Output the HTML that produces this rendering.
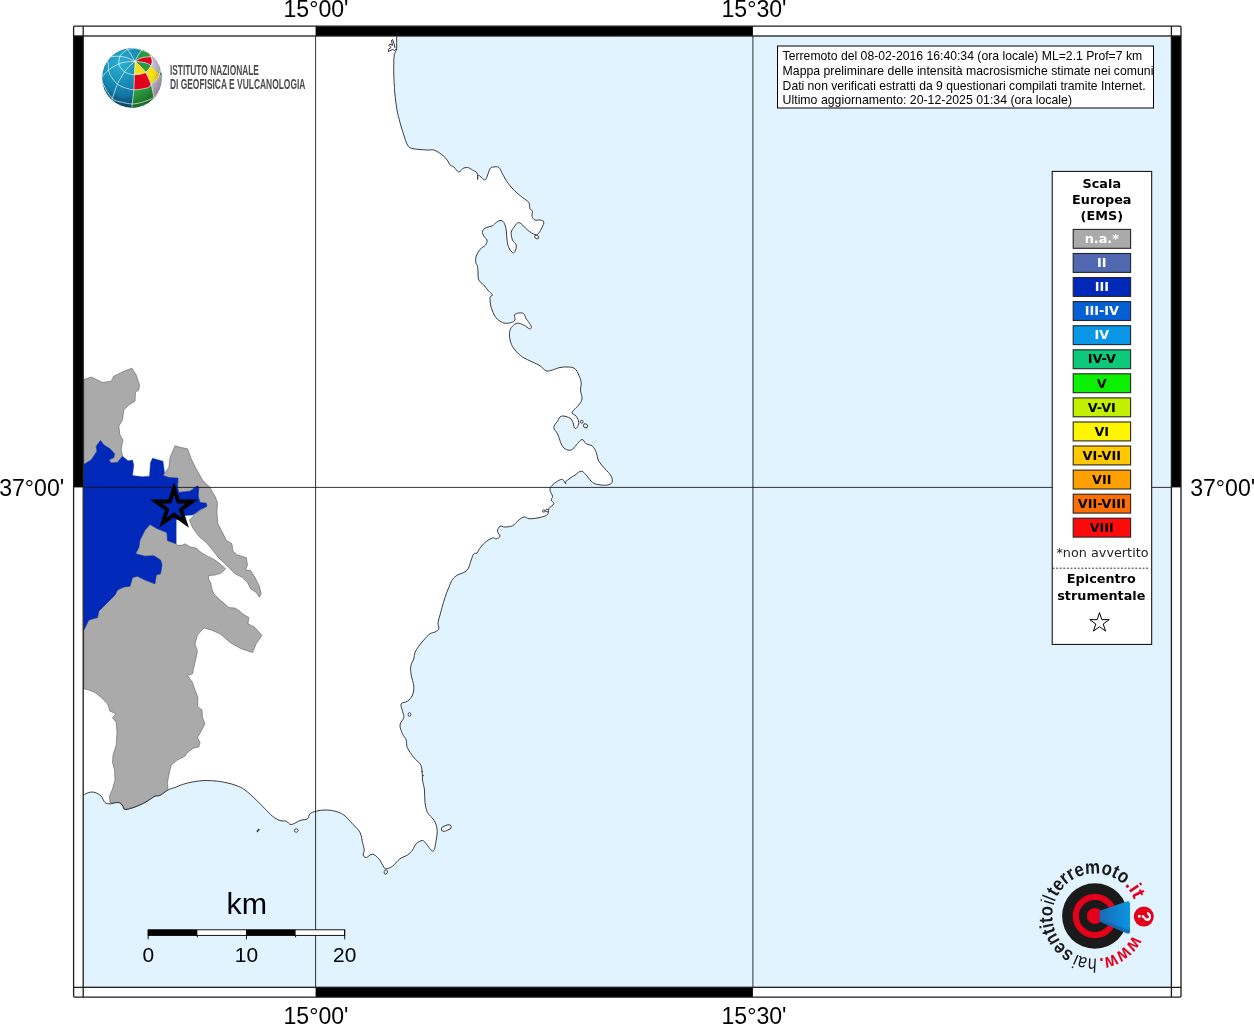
<!DOCTYPE html>
<html lang="it"><head><meta charset="utf-8"><title>Mappa delle intensità macrosismiche</title>
<style>html,body{margin:0;padding:0;background:#fff}body{width:1254px;height:1024px;overflow:hidden}svg{display:block;will-change:transform}text{font-family:"Liberation Sans",sans-serif;fill:#000}.dj{font-family:"DejaVu Sans",sans-serif}.djb{font-family:"DejaVu Sans",sans-serif;font-weight:bold}</style></head><body>
<svg width="1254" height="1024" viewBox="0 0 1254 1024">
<defs>
<clipPath id="mapclip"><rect x="83.2" y="36.0" width="1088.2" height="951.3"/></clipPath>
</defs>
<rect width="1254" height="1024" fill="#fff"/>
<g clip-path="url(#mapclip)">
<path d="M396.6,36.5 C396.6,38.8 396.8,46.2 396.6,49.0 C396.4,51.8 395.9,50.2 395.5,51.5 C395.1,52.8 394.5,54.0 394.2,56.0 C393.9,58.0 393.8,59.0 393.8,62.5 C393.7,66.0 393.6,70.9 393.8,75.0 C393.9,79.1 394.1,81.3 394.3,85.0 C394.5,88.7 394.5,90.4 395.0,95.0 C395.5,99.6 396.1,105.0 397.0,110.0 C397.9,115.0 398.8,117.9 400.0,122.5 C401.2,127.1 402.4,130.9 403.8,135.0 C405.1,139.1 406.1,142.6 407.5,145.0 C408.9,147.4 409.0,147.4 411.2,148.2 C413.5,149.1 417.0,149.2 420.0,149.5 C423.0,149.8 425.0,149.9 427.5,150.0 C430.0,150.1 431.7,149.5 433.8,150.0 C435.8,150.5 436.9,151.4 438.8,152.5 C440.6,153.6 442.1,154.6 443.8,156.2 C445.4,157.9 446.9,159.6 448.0,161.2 C449.1,162.9 448.9,163.9 450.0,165.0 C451.1,166.1 452.1,165.7 453.8,167.0 C455.4,168.3 457.1,171.7 458.8,172.0 C460.4,172.3 460.9,169.6 462.5,168.8 C464.1,167.9 465.7,167.3 467.5,167.5 C469.3,167.7 470.8,169.0 472.5,170.0 C474.2,171.0 476.1,171.3 477.0,173.0 C477.9,174.7 477.3,179.1 477.6,179.5 C477.9,179.9 477.5,175.2 478.6,175.2 C479.7,175.2 482.3,178.8 483.8,179.5 C485.2,180.2 485.1,180.7 486.2,178.8 C487.4,176.8 488.6,170.9 490.0,168.8 C491.4,166.6 492.1,167.2 493.8,167.0 C495.4,166.8 497.1,166.3 498.8,167.5 C500.4,168.7 500.9,171.0 502.5,173.8 C504.1,176.5 505.2,179.3 507.5,182.5 C509.8,185.7 512.2,188.5 515.0,191.2 C517.8,194.0 520.0,195.4 522.5,197.5 C525.0,199.6 527.4,200.4 528.8,202.5 C530.1,204.6 529.3,207.1 530.0,208.8 C530.7,210.4 532.1,209.9 532.5,211.2 C532.9,212.6 531.5,214.6 532.0,216.2 C532.5,217.9 533.5,219.3 535.0,220.0 C536.5,220.7 538.4,219.6 540.0,220.0 C541.6,220.4 543.4,220.6 543.8,222.0 C544.1,223.4 542.9,225.5 542.0,227.5 C541.1,229.5 540.0,231.7 538.8,233.0 C537.5,234.3 537.1,235.1 535.0,234.5 C532.9,233.9 530.0,232.0 527.5,230.0 C525.0,228.0 523.1,225.0 521.2,223.8 C519.4,222.5 518.9,222.3 517.5,223.0 C516.1,223.7 514.9,225.8 513.8,227.5 C512.6,229.2 511.5,230.2 511.2,232.5 C511.0,234.8 511.6,237.7 512.5,240.0 C513.4,242.3 515.8,242.9 516.2,245.0 C516.7,247.1 515.7,249.9 515.0,251.2 C514.3,252.6 513.6,253.2 512.5,252.5 C511.4,251.8 509.8,249.8 508.8,247.5 C507.7,245.2 507.5,243.2 507.0,240.0 C506.5,236.8 506.8,233.2 506.2,230.0 C505.7,226.8 504.9,224.2 503.8,222.5 C502.6,220.8 501.4,220.5 500.0,220.5 C498.6,220.5 497.6,221.5 496.2,222.5 C494.9,223.5 494.3,224.8 492.5,225.8 C490.7,226.7 488.1,226.5 486.2,227.5 C484.4,228.5 483.0,229.6 482.5,231.2 C482.0,232.9 482.9,234.6 483.8,236.2 C484.6,237.9 486.7,238.4 487.0,240.0 C487.3,241.6 486.8,243.3 485.5,245.0 C484.2,246.7 481.7,247.4 480.0,249.5 C478.3,251.6 477.0,253.9 476.2,256.2 C475.5,258.6 475.5,260.7 475.8,262.5 C476.0,264.3 477.1,264.5 477.5,266.2 C477.9,268.0 477.8,269.5 478.0,272.0 C478.2,274.5 477.7,277.6 478.8,280.0 C479.8,282.4 481.9,282.9 483.8,285.0 C485.6,287.1 487.1,289.4 488.8,291.2 C490.4,293.1 492.3,293.9 492.5,295.0 C492.7,296.1 490.2,295.2 490.0,297.5 C489.8,299.8 490.3,304.1 491.2,307.5 C492.2,310.9 493.4,313.7 495.0,316.2 C496.6,318.8 498.2,320.0 500.0,321.2 C501.8,322.5 502.9,323.0 505.0,323.2 C507.1,323.5 509.4,323.1 511.2,322.5 C513.1,321.9 514.4,321.4 515.0,320.0 C515.6,318.6 513.8,316.3 514.5,315.0 C515.2,313.7 517.1,313.2 518.8,313.0 C520.4,312.8 522.4,312.7 523.8,313.8 C525.1,314.8 524.9,316.5 526.2,318.8 C527.6,321.0 530.7,324.4 531.2,326.2 C531.8,328.1 530.9,329.0 529.5,328.8 C528.1,328.5 526.0,326.0 523.8,325.0 C521.5,324.0 519.6,323.0 517.5,323.2 C515.4,323.5 514.0,324.6 512.5,326.2 C511.0,327.9 509.8,329.5 509.5,332.5 C509.2,335.5 509.7,339.3 510.8,342.5 C511.8,345.7 512.8,347.3 515.0,350.0 C517.2,352.7 519.3,354.8 522.5,357.0 C525.7,359.2 529.3,360.4 532.5,362.0 C535.7,363.6 537.5,364.1 540.0,365.8 C542.5,367.4 544.0,370.0 546.2,370.8 C548.5,371.5 550.0,370.6 552.5,370.0 C555.0,369.4 557.0,368.1 560.0,367.5 C563.0,366.9 566.0,366.8 568.8,367.0 C571.5,367.2 573.2,367.3 575.0,368.8 C576.8,370.2 577.6,372.5 578.8,375.0 C579.9,377.5 580.9,379.8 581.2,382.5 C581.6,385.2 580.4,387.0 580.5,390.0 C580.6,393.0 582.3,396.0 582.0,398.8 C581.7,401.5 580.0,403.2 578.8,405.0 C577.5,406.8 576.2,407.3 575.0,408.8 C573.8,410.2 571.8,411.6 572.0,413.0 C572.2,414.4 575.0,414.5 576.2,416.2 C577.5,418.0 578.6,420.4 578.8,422.5 C578.9,424.6 577.8,426.5 577.0,427.5 C576.2,428.5 575.3,429.1 574.5,428.0 C573.7,426.9 573.6,423.2 572.5,421.2 C571.4,419.3 570.8,418.4 568.8,417.5 C566.7,416.6 563.3,415.6 561.2,416.2 C559.2,416.9 558.9,419.2 557.5,421.2 C556.1,423.3 553.8,425.2 553.8,427.5 C553.8,429.8 556.1,430.8 557.5,433.8 C558.9,436.7 559.9,441.0 561.2,443.8 C562.6,446.5 563.2,447.6 565.0,448.8 C566.8,449.9 569.2,450.7 571.2,450.0 C573.3,449.3 574.3,446.9 576.2,445.0 C578.2,443.1 580.2,439.7 582.0,439.5 C583.8,439.3 584.3,442.5 586.2,443.8 C588.2,445.0 590.7,444.6 592.5,446.2 C594.3,447.9 595.1,449.8 596.2,452.5 C597.4,455.2 597.1,458.3 598.8,461.2 C600.4,464.2 602.7,466.0 605.0,468.8 C607.3,471.5 610.0,473.7 611.2,476.2 C612.5,478.8 612.7,480.9 612.0,482.5 C611.3,484.1 609.5,484.5 607.5,485.0 C605.5,485.5 603.5,485.2 601.2,485.0 C599.0,484.8 596.8,484.4 595.0,483.8 C593.2,483.1 592.9,482.9 591.2,481.2 C589.6,479.6 588.1,476.8 586.2,475.0 C584.4,473.2 583.3,471.2 581.2,471.2 C579.2,471.2 577.8,473.2 575.0,475.0 C572.2,476.8 567.9,479.6 566.2,481.2 C564.6,482.9 566.4,484.1 565.8,483.8 C565.1,483.4 564.0,480.0 562.5,479.5 C561.0,479.0 559.4,480.1 557.5,481.2 C555.6,482.4 553.4,483.9 552.0,485.5 C550.6,487.1 549.9,488.0 550.0,490.0 C550.1,492.0 552.3,494.4 552.5,496.2 C552.7,498.1 551.0,498.6 551.2,500.0 C551.5,501.4 554.2,502.1 553.8,503.8 C553.3,505.4 549.9,506.8 548.8,508.8 C547.6,510.7 549.1,512.9 547.5,514.5 C545.9,516.1 543.2,516.7 540.0,517.5 C536.8,518.3 533.0,518.8 530.0,518.8 C527.0,518.7 526.0,516.5 523.8,517.0 C521.5,517.5 519.6,519.6 517.5,521.2 C515.4,522.9 514.8,524.7 512.5,525.8 C510.2,526.8 507.3,526.9 505.0,527.0 C502.7,527.1 501.4,525.5 500.0,526.2 C498.6,527.0 497.5,529.4 497.5,531.2 C497.5,533.1 500.2,534.9 500.0,536.2 C499.8,537.6 497.6,538.4 496.2,538.8 C494.9,539.1 494.6,537.3 492.5,538.0 C490.4,538.7 487.4,540.5 485.0,542.5 C482.6,544.5 481.0,546.8 479.5,548.8 C478.0,550.7 478.1,552.1 477.0,553.0 C475.9,553.9 474.8,552.5 473.8,553.8 C472.7,555.0 472.3,557.2 471.2,560.0 C470.2,562.8 469.4,566.5 468.0,568.8 C466.6,571.0 465.7,571.4 463.8,572.5 C461.8,573.6 459.6,573.7 457.5,575.0 C455.4,576.3 454.1,577.2 452.5,579.5 C450.9,581.8 450.1,584.2 448.8,587.5 C447.4,590.8 446.2,593.8 445.0,597.5 C443.8,601.2 442.9,604.3 442.0,607.5 C441.1,610.7 440.7,612.2 440.0,615.0 C439.3,617.8 438.2,620.0 438.0,622.5 C437.8,625.0 439.3,627.0 438.8,628.8 C438.2,630.5 436.6,631.1 435.0,632.0 C433.4,632.9 432.1,632.3 430.0,633.8 C427.9,635.2 425.8,637.7 423.8,640.0 C421.7,642.3 420.4,644.0 418.8,646.2 C417.1,648.5 415.9,650.2 415.0,652.5 C414.1,654.8 414.5,656.2 413.8,658.8 C413.0,661.3 411.2,663.3 410.8,666.2 C410.3,669.2 410.7,671.3 411.2,675.0 C411.8,678.7 413.5,682.6 413.8,686.2 C414.0,689.9 413.6,692.2 412.5,695.0 C411.4,697.8 409.6,699.6 407.5,701.2 C405.4,702.9 402.2,701.9 401.2,703.8 C400.3,705.6 402.0,708.7 402.5,711.2 C403.0,713.8 404.2,715.0 403.8,717.5 C403.3,720.0 400.2,722.0 400.0,725.0 C399.8,728.0 401.4,731.0 402.5,733.8 C403.6,736.5 405.4,737.5 406.2,740.0 C407.1,742.5 405.9,744.3 407.3,747.5 C408.7,750.7 411.4,754.5 413.8,757.5 C416.1,760.5 418.5,761.5 420.0,763.8 C421.5,766.0 421.5,767.0 422.0,770.0 C422.5,773.0 422.0,776.3 422.5,780.0 C423.0,783.7 424.0,785.9 424.5,790.0 C425.0,794.1 424.4,798.4 425.0,802.5 C425.6,806.6 425.9,809.3 427.5,812.5 C429.1,815.7 432.0,817.0 433.8,820.0 C435.5,823.0 436.5,825.1 437.0,828.8 C437.5,832.4 437.0,835.9 436.2,840.0 C435.5,844.1 434.8,850.6 433.0,851.2 C431.2,851.9 428.2,845.7 426.2,843.8 C424.3,841.8 424.3,840.5 422.5,840.5 C420.7,840.5 418.1,842.0 416.2,843.8 C414.4,845.5 414.1,847.9 412.5,850.0 C410.9,852.1 409.8,853.4 407.5,855.0 C405.2,856.6 402.8,856.7 400.0,858.8 C397.2,860.8 395.0,864.4 392.5,866.2 C390.0,868.1 387.9,868.6 386.2,868.8 C384.6,868.9 385.1,868.8 383.8,867.0 C382.4,865.2 380.8,861.1 378.8,858.8 C376.7,856.4 374.8,854.5 372.5,854.2 C370.2,854.0 367.9,857.4 366.2,857.5 C364.6,857.6 363.6,856.4 363.2,855.0 C362.9,853.6 364.4,852.3 364.2,850.0 C364.1,847.7 363.3,845.7 362.5,842.5 C361.7,839.3 361.8,835.9 360.0,832.5 C358.2,829.1 355.5,827.0 352.5,823.8 C349.5,820.5 347.0,817.3 343.8,815.0 C340.5,812.7 338.4,812.2 335.0,811.2 C331.6,810.3 328.4,810.0 325.0,810.0 C321.6,810.0 319.0,810.6 316.2,811.2 C313.5,811.9 311.6,812.4 310.0,813.8 C308.4,815.1 309.3,817.5 307.5,818.8 C305.7,820.0 303.0,819.4 300.0,820.5 C297.0,821.6 293.8,824.4 291.2,824.5 C288.7,824.6 288.3,822.0 286.2,821.2 C284.2,820.5 282.5,821.4 280.0,820.5 C277.5,819.6 275.2,818.4 272.5,816.2 C269.8,814.1 268.0,811.7 265.0,808.8 C262.0,805.8 259.9,803.4 256.2,800.0 C252.6,796.6 248.7,792.7 245.0,790.0 C241.3,787.3 239.5,786.8 236.2,785.5 C233.0,784.2 230.9,783.8 227.5,783.0 C224.1,782.2 221.6,781.7 217.5,781.2 C213.4,780.8 209.6,780.4 205.0,780.5 C200.4,780.6 196.6,781.3 192.5,782.0 C188.4,782.7 185.7,783.5 182.5,784.5 C179.3,785.5 177.7,786.5 175.0,787.5 C172.3,788.5 170.8,788.5 168.0,790.0 C165.2,791.5 162.4,794.4 160.0,795.5 C157.6,796.6 157.8,795.0 155.0,796.2 C152.2,797.5 148.7,800.5 145.0,802.5 C141.3,804.5 138.7,805.7 135.0,807.0 C131.3,808.3 127.3,809.8 125.0,809.5 C122.7,809.2 123.6,806.8 122.5,805.5 C121.4,804.2 121.0,802.8 118.8,802.5 C116.5,802.2 112.5,803.8 110.0,803.8 C107.5,803.8 106.6,803.9 105.0,802.5 C103.4,801.1 103.1,798.1 101.2,796.2 C99.4,794.4 97.3,793.2 95.0,792.5 C92.7,791.8 90.8,792.0 88.8,792.5 C86.7,793.0 84.7,794.5 83.8,795.0 L83.2,987.3 L1171.4,987.3 L1171.4,36.0 Z" fill="#e1f3ff"/>
<path d="M83.8,379.5 L91.2,377.0 L102.5,382.5 L111.2,381.2 L113.8,376.2 L123.8,371.2 L132.0,368.2 L136.2,375.0 L139.5,385.0 L138.8,390.0 L135.5,392.0 L135.0,401.2 L128.8,405.0 L123.8,410.0 L122.5,420.0 L118.8,426.2 L120.0,435.0 L123.0,440.0 L121.2,448.8 L122.5,456.2 L117.5,462.5 L111.2,463.0 L108.8,460.0 L113.8,457.5 L114.5,453.8 L110.0,448.8 L103.8,445.0 L100.5,440.5 L96.2,446.2 L97.0,451.2 L91.2,460.0 L83.8,464.5Z" fill="#aaaaaa" stroke="#4a4a4a" stroke-width="0.5" stroke-linejoin="round"/>
<path d="M83.8,630.0 L88.8,620.0 L97.5,617.5 L98.8,611.2 L107.5,602.5 L115.0,595.0 L117.5,590.0 L123.8,587.0 L130.0,586.2 L132.5,577.5 L137.5,576.2 L145.0,580.0 L155.0,583.8 L156.2,575.0 L160.5,573.8 L162.0,565.0 L160.5,560.0 L153.8,555.8 L145.0,556.2 L135.5,553.8 L138.8,547.5 L140.0,540.0 L145.0,530.0 L150.0,524.5 L157.5,528.8 L167.0,532.5 L167.5,540.5 L176.2,543.8 L177.5,545.6 L182.5,545.0 L185.0,543.8 L190.0,546.9 L196.2,548.1 L201.2,552.5 L207.5,556.2 L215.0,560.0 L220.0,563.8 L225.6,568.8 L221.2,573.1 L215.0,575.0 L208.8,575.6 L208.5,578.8 L210.6,582.5 L211.9,588.8 L213.8,593.8 L218.8,598.8 L223.8,603.1 L228.8,607.5 L235.0,608.1 L240.0,611.2 L242.5,613.8 L248.8,617.5 L248.0,623.8 L255.0,627.5 L262.0,635.5 L256.2,643.8 L252.5,652.5 L241.2,648.8 L230.0,642.5 L220.0,633.8 L211.2,630.0 L203.8,628.0 L197.5,635.0 L195.0,643.8 L197.5,651.2 L195.0,662.5 L192.5,673.8 L187.5,675.5 L192.5,682.5 L195.0,690.0 L198.0,697.5 L197.5,706.2 L202.0,710.0 L202.5,717.5 L205.0,723.8 L201.2,731.2 L197.5,737.5 L200.0,742.5 L198.8,747.0 L193.8,748.0 L187.5,752.5 L185.0,756.2 L177.5,760.0 L171.2,765.0 L168.8,775.0 L167.5,782.5 L168.0,788.8 L163.8,792.5 L158.8,795.5 L155.0,796.2 L145.0,802.5 L135.0,807.0 L125.0,809.5 L122.5,805.0 L118.8,802.5 L110.0,802.5 L109.5,796.2 L112.5,788.8 L115.0,780.0 L114.5,770.0 L112.5,762.5 L113.0,755.0 L116.2,745.0 L117.0,732.5 L116.2,722.5 L112.5,717.5 L116.2,713.8 L110.0,711.2 L107.5,703.8 L101.2,697.5 L95.0,692.5 L88.8,690.0 L83.8,688.8Z" fill="#aaaaaa" stroke="#4a4a4a" stroke-width="0.5" stroke-linejoin="round"/>
<path d="M163.0,475.5 L168.8,467.5 L170.0,457.5 L175.0,445.8 L181.2,447.5 L187.5,448.8 L191.2,458.8 L196.2,468.8 L202.5,480.0 L210.0,487.5 L215.0,496.2 L217.5,502.5 L216.9,512.5 L218.0,523.8 L222.5,532.5 L226.2,540.0 L231.9,543.8 L233.0,551.2 L237.5,555.0 L246.2,557.5 L247.5,565.0 L245.6,570.0 L250.6,570.6 L255.0,577.5 L259.4,586.2 L261.2,593.8 L259.4,597.2 L256.2,592.5 L250.6,588.8 L247.5,582.5 L242.5,577.5 L235.0,573.8 L230.0,568.8 L225.0,563.8 L218.8,558.1 L212.5,550.0 L206.2,542.5 L198.8,536.2 L192.5,527.5 L189.4,520.0 L192.5,516.9 L195.0,513.8 L201.9,510.0 L206.9,505.6 L206.2,503.1 L200.0,502.5 L198.2,496.2 L198.8,487.5 L197.5,485.8 L190.0,491.2 L178.8,492.5 L177.5,487.5 L178.0,478.2 L168.8,477.5Z" fill="#aaaaaa" stroke="#4a4a4a" stroke-width="0.5" stroke-linejoin="round"/>
<path d="M83.8,464.5 L91.2,460.0 L97.0,451.2 L96.2,446.2 L100.5,440.5 L103.8,445.0 L110.0,448.8 L114.5,453.8 L113.8,457.5 L108.8,460.0 L111.2,463.0 L117.5,462.5 L122.5,456.2 L128.0,460.8 L132.5,460.0 L133.8,465.0 L132.5,475.5 L142.5,476.8 L149.5,476.2 L150.5,462.5 L152.5,458.2 L163.0,461.2 L164.5,472.5 L163.0,475.5 L168.8,477.5 L178.0,478.2 L177.5,487.5 L178.8,492.5 L190.0,491.2 L197.5,485.8 L198.8,487.5 L198.2,496.2 L200.0,502.5 L206.2,503.2 L207.0,506.2 L200.0,510.0 L192.5,515.0 L185.0,515.5 L176.2,520.0 L176.2,543.8 L167.5,540.5 L167.0,532.5 L157.5,528.8 L150.0,524.5 L145.0,530.0 L140.0,540.0 L138.8,547.5 L135.5,553.8 L145.0,556.2 L153.8,555.8 L160.5,560.0 L162.0,565.0 L160.5,573.8 L156.2,575.0 L155.0,583.8 L145.0,580.0 L137.5,576.2 L132.5,577.5 L130.0,586.2 L123.8,587.0 L117.5,590.0 L115.0,595.0 L107.5,602.5 L98.8,611.2 L97.5,617.5 L88.8,620.0 L83.8,630.0Z" fill="#0028b9" stroke="#0028b9" stroke-width="0.4" stroke-linejoin="round"/>
<path d="M396.6,36.5 C396.6,38.8 396.8,46.2 396.6,49.0 C396.4,51.8 395.9,50.2 395.5,51.5 C395.1,52.8 394.5,54.0 394.2,56.0 C393.9,58.0 393.8,59.0 393.8,62.5 C393.7,66.0 393.6,70.9 393.8,75.0 C393.9,79.1 394.1,81.3 394.3,85.0 C394.5,88.7 394.5,90.4 395.0,95.0 C395.5,99.6 396.1,105.0 397.0,110.0 C397.9,115.0 398.8,117.9 400.0,122.5 C401.2,127.1 402.4,130.9 403.8,135.0 C405.1,139.1 406.1,142.6 407.5,145.0 C408.9,147.4 409.0,147.4 411.2,148.2 C413.5,149.1 417.0,149.2 420.0,149.5 C423.0,149.8 425.0,149.9 427.5,150.0 C430.0,150.1 431.7,149.5 433.8,150.0 C435.8,150.5 436.9,151.4 438.8,152.5 C440.6,153.6 442.1,154.6 443.8,156.2 C445.4,157.9 446.9,159.6 448.0,161.2 C449.1,162.9 448.9,163.9 450.0,165.0 C451.1,166.1 452.1,165.7 453.8,167.0 C455.4,168.3 457.1,171.7 458.8,172.0 C460.4,172.3 460.9,169.6 462.5,168.8 C464.1,167.9 465.7,167.3 467.5,167.5 C469.3,167.7 470.8,169.0 472.5,170.0 C474.2,171.0 476.1,171.3 477.0,173.0 C477.9,174.7 477.3,179.1 477.6,179.5 C477.9,179.9 477.5,175.2 478.6,175.2 C479.7,175.2 482.3,178.8 483.8,179.5 C485.2,180.2 485.1,180.7 486.2,178.8 C487.4,176.8 488.6,170.9 490.0,168.8 C491.4,166.6 492.1,167.2 493.8,167.0 C495.4,166.8 497.1,166.3 498.8,167.5 C500.4,168.7 500.9,171.0 502.5,173.8 C504.1,176.5 505.2,179.3 507.5,182.5 C509.8,185.7 512.2,188.5 515.0,191.2 C517.8,194.0 520.0,195.4 522.5,197.5 C525.0,199.6 527.4,200.4 528.8,202.5 C530.1,204.6 529.3,207.1 530.0,208.8 C530.7,210.4 532.1,209.9 532.5,211.2 C532.9,212.6 531.5,214.6 532.0,216.2 C532.5,217.9 533.5,219.3 535.0,220.0 C536.5,220.7 538.4,219.6 540.0,220.0 C541.6,220.4 543.4,220.6 543.8,222.0 C544.1,223.4 542.9,225.5 542.0,227.5 C541.1,229.5 540.0,231.7 538.8,233.0 C537.5,234.3 537.1,235.1 535.0,234.5 C532.9,233.9 530.0,232.0 527.5,230.0 C525.0,228.0 523.1,225.0 521.2,223.8 C519.4,222.5 518.9,222.3 517.5,223.0 C516.1,223.7 514.9,225.8 513.8,227.5 C512.6,229.2 511.5,230.2 511.2,232.5 C511.0,234.8 511.6,237.7 512.5,240.0 C513.4,242.3 515.8,242.9 516.2,245.0 C516.7,247.1 515.7,249.9 515.0,251.2 C514.3,252.6 513.6,253.2 512.5,252.5 C511.4,251.8 509.8,249.8 508.8,247.5 C507.7,245.2 507.5,243.2 507.0,240.0 C506.5,236.8 506.8,233.2 506.2,230.0 C505.7,226.8 504.9,224.2 503.8,222.5 C502.6,220.8 501.4,220.5 500.0,220.5 C498.6,220.5 497.6,221.5 496.2,222.5 C494.9,223.5 494.3,224.8 492.5,225.8 C490.7,226.7 488.1,226.5 486.2,227.5 C484.4,228.5 483.0,229.6 482.5,231.2 C482.0,232.9 482.9,234.6 483.8,236.2 C484.6,237.9 486.7,238.4 487.0,240.0 C487.3,241.6 486.8,243.3 485.5,245.0 C484.2,246.7 481.7,247.4 480.0,249.5 C478.3,251.6 477.0,253.9 476.2,256.2 C475.5,258.6 475.5,260.7 475.8,262.5 C476.0,264.3 477.1,264.5 477.5,266.2 C477.9,268.0 477.8,269.5 478.0,272.0 C478.2,274.5 477.7,277.6 478.8,280.0 C479.8,282.4 481.9,282.9 483.8,285.0 C485.6,287.1 487.1,289.4 488.8,291.2 C490.4,293.1 492.3,293.9 492.5,295.0 C492.7,296.1 490.2,295.2 490.0,297.5 C489.8,299.8 490.3,304.1 491.2,307.5 C492.2,310.9 493.4,313.7 495.0,316.2 C496.6,318.8 498.2,320.0 500.0,321.2 C501.8,322.5 502.9,323.0 505.0,323.2 C507.1,323.5 509.4,323.1 511.2,322.5 C513.1,321.9 514.4,321.4 515.0,320.0 C515.6,318.6 513.8,316.3 514.5,315.0 C515.2,313.7 517.1,313.2 518.8,313.0 C520.4,312.8 522.4,312.7 523.8,313.8 C525.1,314.8 524.9,316.5 526.2,318.8 C527.6,321.0 530.7,324.4 531.2,326.2 C531.8,328.1 530.9,329.0 529.5,328.8 C528.1,328.5 526.0,326.0 523.8,325.0 C521.5,324.0 519.6,323.0 517.5,323.2 C515.4,323.5 514.0,324.6 512.5,326.2 C511.0,327.9 509.8,329.5 509.5,332.5 C509.2,335.5 509.7,339.3 510.8,342.5 C511.8,345.7 512.8,347.3 515.0,350.0 C517.2,352.7 519.3,354.8 522.5,357.0 C525.7,359.2 529.3,360.4 532.5,362.0 C535.7,363.6 537.5,364.1 540.0,365.8 C542.5,367.4 544.0,370.0 546.2,370.8 C548.5,371.5 550.0,370.6 552.5,370.0 C555.0,369.4 557.0,368.1 560.0,367.5 C563.0,366.9 566.0,366.8 568.8,367.0 C571.5,367.2 573.2,367.3 575.0,368.8 C576.8,370.2 577.6,372.5 578.8,375.0 C579.9,377.5 580.9,379.8 581.2,382.5 C581.6,385.2 580.4,387.0 580.5,390.0 C580.6,393.0 582.3,396.0 582.0,398.8 C581.7,401.5 580.0,403.2 578.8,405.0 C577.5,406.8 576.2,407.3 575.0,408.8 C573.8,410.2 571.8,411.6 572.0,413.0 C572.2,414.4 575.0,414.5 576.2,416.2 C577.5,418.0 578.6,420.4 578.8,422.5 C578.9,424.6 577.8,426.5 577.0,427.5 C576.2,428.5 575.3,429.1 574.5,428.0 C573.7,426.9 573.6,423.2 572.5,421.2 C571.4,419.3 570.8,418.4 568.8,417.5 C566.7,416.6 563.3,415.6 561.2,416.2 C559.2,416.9 558.9,419.2 557.5,421.2 C556.1,423.3 553.8,425.2 553.8,427.5 C553.8,429.8 556.1,430.8 557.5,433.8 C558.9,436.7 559.9,441.0 561.2,443.8 C562.6,446.5 563.2,447.6 565.0,448.8 C566.8,449.9 569.2,450.7 571.2,450.0 C573.3,449.3 574.3,446.9 576.2,445.0 C578.2,443.1 580.2,439.7 582.0,439.5 C583.8,439.3 584.3,442.5 586.2,443.8 C588.2,445.0 590.7,444.6 592.5,446.2 C594.3,447.9 595.1,449.8 596.2,452.5 C597.4,455.2 597.1,458.3 598.8,461.2 C600.4,464.2 602.7,466.0 605.0,468.8 C607.3,471.5 610.0,473.7 611.2,476.2 C612.5,478.8 612.7,480.9 612.0,482.5 C611.3,484.1 609.5,484.5 607.5,485.0 C605.5,485.5 603.5,485.2 601.2,485.0 C599.0,484.8 596.8,484.4 595.0,483.8 C593.2,483.1 592.9,482.9 591.2,481.2 C589.6,479.6 588.1,476.8 586.2,475.0 C584.4,473.2 583.3,471.2 581.2,471.2 C579.2,471.2 577.8,473.2 575.0,475.0 C572.2,476.8 567.9,479.6 566.2,481.2 C564.6,482.9 566.4,484.1 565.8,483.8 C565.1,483.4 564.0,480.0 562.5,479.5 C561.0,479.0 559.4,480.1 557.5,481.2 C555.6,482.4 553.4,483.9 552.0,485.5 C550.6,487.1 549.9,488.0 550.0,490.0 C550.1,492.0 552.3,494.4 552.5,496.2 C552.7,498.1 551.0,498.6 551.2,500.0 C551.5,501.4 554.2,502.1 553.8,503.8 C553.3,505.4 549.9,506.8 548.8,508.8 C547.6,510.7 549.1,512.9 547.5,514.5 C545.9,516.1 543.2,516.7 540.0,517.5 C536.8,518.3 533.0,518.8 530.0,518.8 C527.0,518.7 526.0,516.5 523.8,517.0 C521.5,517.5 519.6,519.6 517.5,521.2 C515.4,522.9 514.8,524.7 512.5,525.8 C510.2,526.8 507.3,526.9 505.0,527.0 C502.7,527.1 501.4,525.5 500.0,526.2 C498.6,527.0 497.5,529.4 497.5,531.2 C497.5,533.1 500.2,534.9 500.0,536.2 C499.8,537.6 497.6,538.4 496.2,538.8 C494.9,539.1 494.6,537.3 492.5,538.0 C490.4,538.7 487.4,540.5 485.0,542.5 C482.6,544.5 481.0,546.8 479.5,548.8 C478.0,550.7 478.1,552.1 477.0,553.0 C475.9,553.9 474.8,552.5 473.8,553.8 C472.7,555.0 472.3,557.2 471.2,560.0 C470.2,562.8 469.4,566.5 468.0,568.8 C466.6,571.0 465.7,571.4 463.8,572.5 C461.8,573.6 459.6,573.7 457.5,575.0 C455.4,576.3 454.1,577.2 452.5,579.5 C450.9,581.8 450.1,584.2 448.8,587.5 C447.4,590.8 446.2,593.8 445.0,597.5 C443.8,601.2 442.9,604.3 442.0,607.5 C441.1,610.7 440.7,612.2 440.0,615.0 C439.3,617.8 438.2,620.0 438.0,622.5 C437.8,625.0 439.3,627.0 438.8,628.8 C438.2,630.5 436.6,631.1 435.0,632.0 C433.4,632.9 432.1,632.3 430.0,633.8 C427.9,635.2 425.8,637.7 423.8,640.0 C421.7,642.3 420.4,644.0 418.8,646.2 C417.1,648.5 415.9,650.2 415.0,652.5 C414.1,654.8 414.5,656.2 413.8,658.8 C413.0,661.3 411.2,663.3 410.8,666.2 C410.3,669.2 410.7,671.3 411.2,675.0 C411.8,678.7 413.5,682.6 413.8,686.2 C414.0,689.9 413.6,692.2 412.5,695.0 C411.4,697.8 409.6,699.6 407.5,701.2 C405.4,702.9 402.2,701.9 401.2,703.8 C400.3,705.6 402.0,708.7 402.5,711.2 C403.0,713.8 404.2,715.0 403.8,717.5 C403.3,720.0 400.2,722.0 400.0,725.0 C399.8,728.0 401.4,731.0 402.5,733.8 C403.6,736.5 405.4,737.5 406.2,740.0 C407.1,742.5 405.9,744.3 407.3,747.5 C408.7,750.7 411.4,754.5 413.8,757.5 C416.1,760.5 418.5,761.5 420.0,763.8 C421.5,766.0 421.5,767.0 422.0,770.0 C422.5,773.0 422.0,776.3 422.5,780.0 C423.0,783.7 424.0,785.9 424.5,790.0 C425.0,794.1 424.4,798.4 425.0,802.5 C425.6,806.6 425.9,809.3 427.5,812.5 C429.1,815.7 432.0,817.0 433.8,820.0 C435.5,823.0 436.5,825.1 437.0,828.8 C437.5,832.4 437.0,835.9 436.2,840.0 C435.5,844.1 434.8,850.6 433.0,851.2 C431.2,851.9 428.2,845.7 426.2,843.8 C424.3,841.8 424.3,840.5 422.5,840.5 C420.7,840.5 418.1,842.0 416.2,843.8 C414.4,845.5 414.1,847.9 412.5,850.0 C410.9,852.1 409.8,853.4 407.5,855.0 C405.2,856.6 402.8,856.7 400.0,858.8 C397.2,860.8 395.0,864.4 392.5,866.2 C390.0,868.1 387.9,868.6 386.2,868.8 C384.6,868.9 385.1,868.8 383.8,867.0 C382.4,865.2 380.8,861.1 378.8,858.8 C376.7,856.4 374.8,854.5 372.5,854.2 C370.2,854.0 367.9,857.4 366.2,857.5 C364.6,857.6 363.6,856.4 363.2,855.0 C362.9,853.6 364.4,852.3 364.2,850.0 C364.1,847.7 363.3,845.7 362.5,842.5 C361.7,839.3 361.8,835.9 360.0,832.5 C358.2,829.1 355.5,827.0 352.5,823.8 C349.5,820.5 347.0,817.3 343.8,815.0 C340.5,812.7 338.4,812.2 335.0,811.2 C331.6,810.3 328.4,810.0 325.0,810.0 C321.6,810.0 319.0,810.6 316.2,811.2 C313.5,811.9 311.6,812.4 310.0,813.8 C308.4,815.1 309.3,817.5 307.5,818.8 C305.7,820.0 303.0,819.4 300.0,820.5 C297.0,821.6 293.8,824.4 291.2,824.5 C288.7,824.6 288.3,822.0 286.2,821.2 C284.2,820.5 282.5,821.4 280.0,820.5 C277.5,819.6 275.2,818.4 272.5,816.2 C269.8,814.1 268.0,811.7 265.0,808.8 C262.0,805.8 259.9,803.4 256.2,800.0 C252.6,796.6 248.7,792.7 245.0,790.0 C241.3,787.3 239.5,786.8 236.2,785.5 C233.0,784.2 230.9,783.8 227.5,783.0 C224.1,782.2 221.6,781.7 217.5,781.2 C213.4,780.8 209.6,780.4 205.0,780.5 C200.4,780.6 196.6,781.3 192.5,782.0 C188.4,782.7 185.7,783.5 182.5,784.5 C179.3,785.5 177.7,786.5 175.0,787.5 C172.3,788.5 170.8,788.5 168.0,790.0 C165.2,791.5 162.4,794.4 160.0,795.5 C157.6,796.6 157.8,795.0 155.0,796.2 C152.2,797.5 148.7,800.5 145.0,802.5 C141.3,804.5 138.7,805.7 135.0,807.0 C131.3,808.3 127.3,809.8 125.0,809.5 C122.7,809.2 123.6,806.8 122.5,805.5 C121.4,804.2 121.0,802.8 118.8,802.5 C116.5,802.2 112.5,803.8 110.0,803.8 C107.5,803.8 106.6,803.9 105.0,802.5 C103.4,801.1 103.1,798.1 101.2,796.2 C99.4,794.4 97.3,793.2 95.0,792.5 C92.7,791.8 90.8,792.0 88.8,792.5 C86.7,793.0 84.7,794.5 83.8,795.0" fill="none" stroke="#2e3236" stroke-width="0.95" stroke-linejoin="round"/>
<path d="M396.6,48.8 L394.5,50.5 L392.5,49.5 L388.5,51.5 L388.2,49.5 L391.0,47.5 L389.0,45.5 L390.0,44.0 L392.5,45.5 L391.5,40.5 L392.5,39.5 L394.0,43.5 L395.0,48.0" fill="none" stroke="#2e3236" stroke-width="1" stroke-linejoin="round"/>
<ellipse cx="536.75" cy="237" rx="2.2" ry="1.6" transform="rotate(30 536.75 237)" fill="#fff" stroke="#2e3236" stroke-width="0.9"/>
<ellipse cx="581.75" cy="421.75" rx="1.4" ry="1.4" transform="rotate(0 581.75 421.75)" fill="#fff" stroke="#2e3236" stroke-width="0.9"/>
<ellipse cx="585.5" cy="425.75" rx="2.1" ry="1.8" transform="rotate(30 585.5 425.75)" fill="#fff" stroke="#2e3236" stroke-width="0.9"/>
<ellipse cx="547" cy="510.5" rx="1.4" ry="1.4" transform="rotate(0 547 510.5)" fill="#fff" stroke="#2e3236" stroke-width="0.9"/>
<ellipse cx="543.8" cy="511" rx="1.2" ry="1.2" transform="rotate(0 543.8 511)" fill="#fff" stroke="#2e3236" stroke-width="0.9"/>
<ellipse cx="409.5" cy="714.5" rx="1.4" ry="1.8" transform="rotate(0 409.5 714.5)" fill="#fff" stroke="#2e3236" stroke-width="0.9"/>
<ellipse cx="296.25" cy="830.5" rx="1.9" ry="1.7" transform="rotate(0 296.25 830.5)" fill="#fff" stroke="#2e3236" stroke-width="0.9"/>
<ellipse cx="446.25" cy="828" rx="5.2" ry="2.6" transform="rotate(-22 446.25 828)" fill="#fff" stroke="#2e3236" stroke-width="0.9"/>
<ellipse cx="385.75" cy="872" rx="1.6" ry="2.2" transform="rotate(15 385.75 872)" fill="#fff" stroke="#2e3236" stroke-width="0.9"/>
<circle cx="257.5" cy="831.5" r="0.8" fill="#2e3236"/>
<circle cx="258.8" cy="830" r="0.8" fill="#2e3236"/>
<circle cx="422" cy="771.5" r="0.8" fill="#2e3236"/>
<circle cx="423" cy="775.5" r="0.8" fill="#2e3236"/>
<circle cx="257.5" cy="830.5" r="0.8" fill="#2e3236"/>
<circle cx="258.7" cy="829.5" r="0.8" fill="#2e3236"/>
<path d="M315.6,36.0V987.3M752.9,36.0V987.3M83.2,487.4H1171.4" stroke="#111" stroke-width="0.85" fill="none"/>
</g>
<path d="M73.6,26.2H1181.0V997.1H73.6Z M83.2,36.0V987.3H1171.4V36.0Z" fill="#fff" fill-rule="evenodd"/>
<rect x="73.6" y="36.0" width="9.6" height="451.4" fill="#000"/>
<rect x="1171.4" y="36.0" width="9.6" height="451.4" fill="#000"/>
<rect x="315.6" y="26.2" width="437.3" height="9.8" fill="#000"/>
<rect x="315.6" y="987.3" width="437.3" height="9.8" fill="#000"/>
<rect x="73.6" y="26.2" width="1107.4" height="970.9" rx="1" fill="none" stroke="#1c1c1c" stroke-width="1.3"/>
<rect x="83.2" y="36.0" width="1088.2" height="951.3" fill="none" stroke="#1c1c1c" stroke-width="1.3"/>
<path d="M83.2,26.2V36.0M1171.4,26.2V36.0M83.2,987.3V997.1M1171.4,987.3V997.1M73.6,36.0H83.2M1171.4,36.0H1181.0M73.6,987.3H83.2M1171.4,987.3H1181.0" stroke="#1c1c1c" stroke-width="1.3" fill="none"/>
<text x="316.0" y="16.8" font-size="23.1" text-anchor="middle">15°00'</text>
<text x="754" y="16.8" font-size="23.1" text-anchor="middle">15°30'</text>
<text x="316.0" y="1023.8" font-size="23.1" text-anchor="middle">15°00'</text>
<text x="754" y="1023.8" font-size="23.1" text-anchor="middle">15°30'</text>
<text x="64.2" y="495.7" font-size="23.1" text-anchor="end">37°00'</text>
<text x="1190.2" y="495.7" font-size="23.1">37°00'</text>
<path d="M174.00,488.30 L178.27,501.43 L192.07,501.43 L180.90,509.54 L185.17,522.67 L174.00,514.56 L162.83,522.67 L167.10,509.54 L155.93,501.43 L169.73,501.43Z" fill="none" stroke="#000" stroke-width="3.9" stroke-miterlimit="10"/>
<rect x="777.5" y="46" width="376" height="62" fill="#fff" stroke="#000" stroke-width="1"/>
<text x="782.6" y="60.1" font-size="12.25" textLength="359.6" lengthAdjust="spacingAndGlyphs">Terremoto del 08-02-2016 16:40:34 (ora locale) ML=2.1 Prof=7 km</text>
<text x="782.6" y="74.6" font-size="12.25" textLength="370.8" lengthAdjust="spacingAndGlyphs">Mappa preliminare delle intensità macrosismiche stimate nei comuni</text>
<text x="782.6" y="89.5" font-size="12.25" textLength="363.0" lengthAdjust="spacingAndGlyphs">Dati non verificati estratti da 9 questionari compilati tramite Internet.</text>
<text x="782.6" y="104.0" font-size="12.25" textLength="289.4" lengthAdjust="spacingAndGlyphs">Ultimo aggiornamento: 20-12-2025 01:34 (ora locale)</text>
<rect x="1052.2" y="171.4" width="99.5" height="473" fill="#fff" stroke="#000" stroke-width="1"/>
<text class="djb" x="1101.8" y="187.8" font-size="12.8" text-anchor="middle">Scala</text>
<text class="djb" x="1101.8" y="203.8" font-size="12.8" text-anchor="middle">Europea</text>
<text class="djb" x="1101.8" y="219.6" font-size="12.8" text-anchor="middle">(EMS)</text>
<rect x="1073.2" y="229.4" width="57.4" height="18.9" fill="#aaaaaa" stroke="#262626" stroke-width="1.1"/>
<text class="djb" x="1101.8" y="243.1" font-size="12.8" text-anchor="middle" style="fill:#fff">n.a.*</text>
<rect x="1073.2" y="253.5" width="57.4" height="18.9" fill="#5068b0" stroke="#262626" stroke-width="1.1"/>
<text class="djb" x="1101.8" y="267.2" font-size="12.8" text-anchor="middle" style="fill:#fff">II</text>
<rect x="1073.2" y="277.5" width="57.4" height="18.9" fill="#0028b9" stroke="#262626" stroke-width="1.1"/>
<text class="djb" x="1101.8" y="291.2" font-size="12.8" text-anchor="middle" style="fill:#fff">III</text>
<rect x="1073.2" y="301.6" width="57.4" height="18.9" fill="#0460d2" stroke="#262626" stroke-width="1.1"/>
<text class="djb" x="1101.8" y="315.3" font-size="12.8" text-anchor="middle" style="fill:#fff">III-IV</text>
<rect x="1073.2" y="325.7" width="57.4" height="18.9" fill="#0a96e6" stroke="#262626" stroke-width="1.1"/>
<text class="djb" x="1101.8" y="339.4" font-size="12.8" text-anchor="middle" style="fill:#fff">IV</text>
<rect x="1073.2" y="349.8" width="57.4" height="18.9" fill="#0cc878" stroke="#262626" stroke-width="1.1"/>
<text class="djb" x="1101.8" y="363.4" font-size="12.8" text-anchor="middle" style="fill:#000">IV-V</text>
<rect x="1073.2" y="373.8" width="57.4" height="18.9" fill="#0af000" stroke="#262626" stroke-width="1.1"/>
<text class="djb" x="1101.8" y="387.5" font-size="12.8" text-anchor="middle" style="fill:#000">V</text>
<rect x="1073.2" y="397.9" width="57.4" height="18.9" fill="#c3f000" stroke="#262626" stroke-width="1.1"/>
<text class="djb" x="1101.8" y="411.6" font-size="12.8" text-anchor="middle" style="fill:#000">V-VI</text>
<rect x="1073.2" y="422.0" width="57.4" height="18.9" fill="#fff500" stroke="#262626" stroke-width="1.1"/>
<text class="djb" x="1101.8" y="435.7" font-size="12.8" text-anchor="middle" style="fill:#000">VI</text>
<rect x="1073.2" y="446.0" width="57.4" height="18.9" fill="#ffc800" stroke="#262626" stroke-width="1.1"/>
<text class="djb" x="1101.8" y="459.7" font-size="12.8" text-anchor="middle" style="fill:#000">VI-VII</text>
<rect x="1073.2" y="470.1" width="57.4" height="18.9" fill="#ffa000" stroke="#262626" stroke-width="1.1"/>
<text class="djb" x="1101.8" y="483.8" font-size="12.8" text-anchor="middle" style="fill:#000">VII</text>
<rect x="1073.2" y="494.2" width="57.4" height="18.9" fill="#ff6e00" stroke="#262626" stroke-width="1.1"/>
<text class="djb" x="1101.8" y="507.9" font-size="12.8" text-anchor="middle" style="fill:#000">VII-VIII</text>
<rect x="1073.2" y="518.2" width="57.4" height="18.9" fill="#ff0a0a" stroke="#262626" stroke-width="1.1"/>
<text class="djb" x="1101.8" y="531.9" font-size="12.8" text-anchor="middle" style="fill:#000">VIII</text>
<text class="dj" x="1102.5" y="557.4" font-size="12.8" text-anchor="middle" style="fill:#222">*non avvertito</text>
<path d="M1052.5,568.2H1149" stroke="#000" stroke-width="0.8" stroke-dasharray="2,1.6" fill="none"/>
<text class="djb" x="1101.3" y="583.4" font-size="12.8" text-anchor="middle">Epicentro</text>
<text class="djb" x="1101.3" y="599.8" font-size="12.8" text-anchor="middle">strumentale</text>
<path d="M1099.50,612.60 L1101.79,619.65 L1109.20,619.65 L1103.21,624.00 L1105.50,631.05 L1099.50,626.70 L1093.50,631.05 L1095.79,624.00 L1089.80,619.65 L1097.21,619.65Z" fill="#fff" stroke="#000" stroke-width="1"/>
<rect x="148.2" y="929.8" width="196.5" height="5.6" fill="#fff" stroke="#000" stroke-width="0.9"/>
<rect x="148.2" y="929.8" width="49.12" height="5.6" fill="#000"/>
<rect x="246.45" y="929.8" width="49.12" height="5.6" fill="#000"/>
<path d="M148.2,929.8V939.4M246.45,929.8V939.4M344.7,929.8V939.4M197.32,935.4V937.4M295.57,935.4V937.4" stroke="#000" stroke-width="0.9" fill="none"/>
<text x="148.2" y="962.4" font-size="20.9" text-anchor="middle">0</text>
<text x="246.4" y="962.4" font-size="20.9" text-anchor="middle">10</text>
<text x="344.7" y="962.4" font-size="20.9" text-anchor="middle">20</text>
<text x="246.7" y="914.4" font-size="30.4" text-anchor="middle">km</text>
<defs>
<clipPath id="gclip"><circle cx="131.9" cy="77.9" r="30.0"/></clipPath>
<radialGradient id="gblue" cx="119.9" cy="63.900000000000006" r="50" gradientUnits="userSpaceOnUse"><stop offset="0" stop-color="#2db2d0"/><stop offset="0.45" stop-color="#1687b2"/><stop offset="1" stop-color="#085886"/></radialGradient>
<radialGradient id="gshade" cx="127.9" cy="69.9" r="36" gradientUnits="userSpaceOnUse"><stop offset="0" stop-color="#000" stop-opacity="0"/><stop offset="0.7" stop-color="#000" stop-opacity="0"/><stop offset="1" stop-color="#000" stop-opacity="0.28"/></radialGradient>
</defs>
<g clip-path="url(#gclip)">
<circle cx="131.9" cy="77.9" r="30.0" fill="url(#gblue)"/>
<path d="M135.10,61.32 L141.60,50.12 L145.58,49.39 L149.91,52.28 L151.00,56.62 L141.97,57.70Z" fill="#2a9a3c"/>
<path d="M148.83,53.37 L151.00,56.62 L154.97,56.26 L152.08,52.28Z" fill="#f7e017"/>
<path d="M135.10,61.32 L141.97,57.70 L151.00,56.62 L152.08,60.95 L151.00,64.93 L145.58,62.54Z" fill="#e2001a"/>
<path d="M151.00,56.62 L154.97,54.45 L161.47,63.84 L163.64,72.51 L159.16,73.09 L151.00,65.43 L152.08,60.95Z" fill="#cdbfd6"/>
<path d="M135.10,61.32 L145.58,62.98 L151.00,66.01 L145.58,72.30 L141.24,67.10Z" fill="#2a9a3c"/>
<path d="M135.10,61.32 L141.24,67.10 L145.58,72.30 L144.86,72.88 L138.35,74.83 L134.45,74.68Z" fill="#f7e017"/>
<path d="M151.00,66.01 L159.16,74.10 L157.14,79.38 L151.00,84.22 L145.58,72.30Z" fill="#f7e017"/>
<path d="M159.16,73.09 L163.64,72.51 L163.64,79.02 L159.52,74.54Z" fill="#2a9a3c"/>
<path d="M134.45,74.90 L138.35,75.04 L144.86,73.09 L145.58,72.30 L151.00,84.22 L148.83,87.33 L141.24,89.13 L133.87,89.86Z" fill="#e2001a"/>
<path d="M151.00,84.22 L157.14,79.38 L159.31,74.54 L164.36,80.46 L162.20,90.58 L157.86,92.75 L153.89,97.23Z" fill="#cdbfd6"/>
<path d="M133.87,89.86 L141.24,89.28 L148.83,87.47 L151.00,84.36 L153.89,97.23 L157.14,103.58 L141.97,110.81 L131.71,109.36Z" fill="#2a9a3c"/>
<path d="M153.89,97.23 L157.86,92.75 L161.47,94.91 L156.42,101.42Z" fill="#e2001a"/>
<circle cx="131.9" cy="77.9" r="30.0" fill="url(#gshade)"/>
<path d="M135.10,61.32 C134.98,63.54 134.58,69.93 134.38,74.68 C134.17,79.44 134.23,84.98 133.87,89.86 C133.51,94.73 132.55,100.69 132.21,103.95 C131.87,107.20 131.91,108.46 131.85,109.36 M135.10,61.32 C136.12,62.28 139.50,65.26 141.24,67.10 C142.99,68.93 143.95,69.44 145.58,72.30 C147.20,75.15 149.61,80.07 151.00,84.22 C152.38,88.37 153.10,94.12 153.89,97.23 C154.67,100.33 155.39,101.92 155.69,102.86 M135.10,61.32 C136.85,61.57 142.93,62.07 145.58,62.83 C148.23,63.59 148.73,64.01 151.00,65.87 C153.26,67.72 157.11,71.71 159.16,73.96 C161.21,76.21 162.59,78.48 163.28,79.38 M135.10,61.32 C136.25,60.71 139.32,58.49 141.97,57.70 C144.61,56.92 148.83,57.02 151.00,56.62 C153.16,56.22 154.31,55.53 154.97,55.32 M135.10,61.32 C135.64,60.23 137.27,56.68 138.35,54.81 C139.44,52.95 140.82,51.32 141.60,50.12 C142.39,48.91 142.81,48.01 143.05,47.59 M134.97,61.47 C134.29,60.29 132.20,56.37 130.94,54.38 C129.68,52.39 128.20,50.67 127.39,49.54 C126.59,48.42 126.32,47.93 126.10,47.61 M134.97,61.47 C133.70,60.88 129.89,58.78 127.39,57.92 C124.90,57.06 122.40,56.55 119.98,56.31 C117.56,56.07 114.88,56.26 112.89,56.47 C110.90,56.69 108.86,57.41 108.06,57.60 M134.97,61.47 C133.44,61.58 128.44,61.74 125.78,62.11 C123.12,62.49 121.86,62.44 119.01,63.72 C116.17,65.01 111.44,67.70 108.70,69.85 C105.96,72.00 103.92,75.06 102.58,76.62 C101.24,78.17 100.97,78.76 100.64,79.19 M134.97,61.47 C133.97,62.33 130.75,64.91 129.00,66.63 C127.26,68.34 125.89,69.85 124.49,71.78 C123.10,73.72 121.81,76.18 120.63,78.23 C119.44,80.28 118.78,80.69 117.40,84.08 C116.02,87.46 113.49,95.03 112.34,98.53 C111.20,102.02 110.84,103.95 110.53,105.03 M134.45,74.68 C137.09,74.54 142.10,74.32 144.86,72.88 C147.61,71.43 149.77,68.00 151.00,66.01 C152.23,64.02 152.23,62.52 152.23,60.95 C152.23,59.39 151.62,57.92 151.00,56.62 C150.37,55.32 150.03,54.23 148.47,53.15 C146.90,52.07 143.89,50.89 141.60,50.12 C139.32,49.34 137.11,48.62 134.74,48.53 C132.37,48.43 129.42,48.78 127.39,49.54 C125.36,50.31 123.79,51.96 122.56,53.09 C121.32,54.22 120.60,54.59 119.98,56.31 C119.36,58.03 118.75,61.47 118.85,63.40 C118.96,65.34 119.69,66.52 120.63,67.91 C121.57,69.31 123.10,70.81 124.49,71.78 C125.89,72.75 127.34,73.23 129.00,73.72 C130.66,74.20 131.81,74.82 134.45,74.68Z M108.06,57.60 C108.00,58.09 107.68,59.21 107.73,60.50 C107.79,61.79 108.24,63.78 108.38,65.34 C108.51,66.89 108.16,68.13 108.54,69.85 C108.92,71.57 109.16,73.28 110.63,75.65 C112.11,78.02 114.71,81.95 117.40,84.08 C120.09,86.20 124.05,87.45 126.79,88.41 C129.54,89.37 131.46,89.74 133.87,89.86 C136.28,89.98 138.75,89.55 141.24,89.13 C143.74,88.71 147.20,88.15 148.83,87.33 C150.46,86.51 149.61,85.54 151.00,84.22 C152.38,82.89 155.75,81.03 157.14,79.38 C158.52,77.73 158.64,76.07 159.31,74.32 C159.97,72.57 160.81,69.80 161.11,68.90 M101.86,73.96 C102.04,75.53 101.20,79.26 102.95,83.35 C104.69,87.45 109.09,95.37 112.34,98.53 C115.59,101.68 119.14,101.38 122.46,102.28 C125.77,103.19 128.96,103.95 132.21,103.95 C135.46,103.95 139.01,103.04 141.97,102.28 C144.92,101.52 147.93,100.24 149.91,99.39 C151.90,98.55 152.32,98.57 153.89,97.23 C155.45,95.88 158.40,92.29 159.31,91.30" fill="none" stroke="#fff" stroke-opacity="0.92" stroke-width="0.7" stroke-linecap="round"/>
</g>
<text x="169.9" y="75.2" font-size="14.4" font-weight="bold" textLength="89" lengthAdjust="spacingAndGlyphs" style="fill:#4b4b4d">ISTITUTO NAZIONALE</text>
<text x="169.9" y="89.3" font-size="14.4" font-weight="bold" textLength="135.5" lengthAdjust="spacingAndGlyphs" style="fill:#4b4b4d">DI GEOFISICA E VULCANOLOGIA</text>
<defs>
<linearGradient id="cone" x1="1100" y1="0" x2="1130" y2="0" gradientUnits="userSpaceOnUse"><stop offset="0" stop-color="#1a6ab8"/><stop offset="1" stop-color="#0a96e0"/></linearGradient>
<path id="hcirc" d="M1134.84,930.54 A42.5,42.5 0 1 1 1054.96,901.46 A42.5,42.5 0 1 1 1134.84,930.54"/>
</defs>
<circle cx="1094.9" cy="916.0" r="32.8" fill="#1a1a1a"/>
<circle cx="1094.9" cy="916.0" r="19.1" fill="none" stroke="#e2001a" stroke-width="6.2"/>
<circle cx="1094.9" cy="916.0" r="8.1" fill="#e2001a"/>
<path d="M1099.8,910.8 L1126.5,901.6 Q1130,900.6 1130,903.8 L1130,931 Q1130,934.6 1126.8,933.2 L1099.6,921.6 Z" fill="url(#cone)"/>
<path d="M1099.6,921.6 L1126.8,933.2 Q1130,934.6 1130,931 L1130,927.5 Q1129.5,930.5 1126.5,929.4 L1101,919.2 Z" fill="#1560a8" opacity="0.7"/>
<circle cx="1143.8" cy="916.6" r="10" fill="#e2001a"/>
<text x="1143.8" y="922.9" font-size="17.5" font-weight="bold" text-anchor="middle" transform="rotate(90 1143.8 916.6)" style="fill:#fff">?</text>
<text font-size="19.5" font-weight="bold" style="fill:#e2001a"><textPath href="#hcirc" startOffset="5.19" textLength="42.65" lengthAdjust="spacingAndGlyphs">www.</textPath></text>
<text font-size="19.5" font-weight="normal" style="fill:#1a1a1a"><textPath href="#hcirc" startOffset="49.70" textLength="21.51" lengthAdjust="spacingAndGlyphs">hai</textPath></text>
<text font-size="19.5" font-weight="bold" style="fill:#1a1a1a"><textPath href="#hcirc" startOffset="73.43" textLength="54.52" lengthAdjust="spacingAndGlyphs">sentito</textPath></text>
<text font-size="19.5" font-weight="normal" style="fill:#1a1a1a"><textPath href="#hcirc" startOffset="128.70" textLength="7.79" lengthAdjust="spacingAndGlyphs">il</textPath></text>
<text font-size="19.5" font-weight="bold" style="fill:#1a1a1a"><textPath href="#hcirc" startOffset="137.97" textLength="79.00" lengthAdjust="spacingAndGlyphs">terremoto</textPath></text>
<text font-size="19.5" font-weight="bold" style="fill:#e2001a"><textPath href="#hcirc" startOffset="217.71" textLength="17.43" lengthAdjust="spacingAndGlyphs">.it</textPath></text>
</svg></body></html>
